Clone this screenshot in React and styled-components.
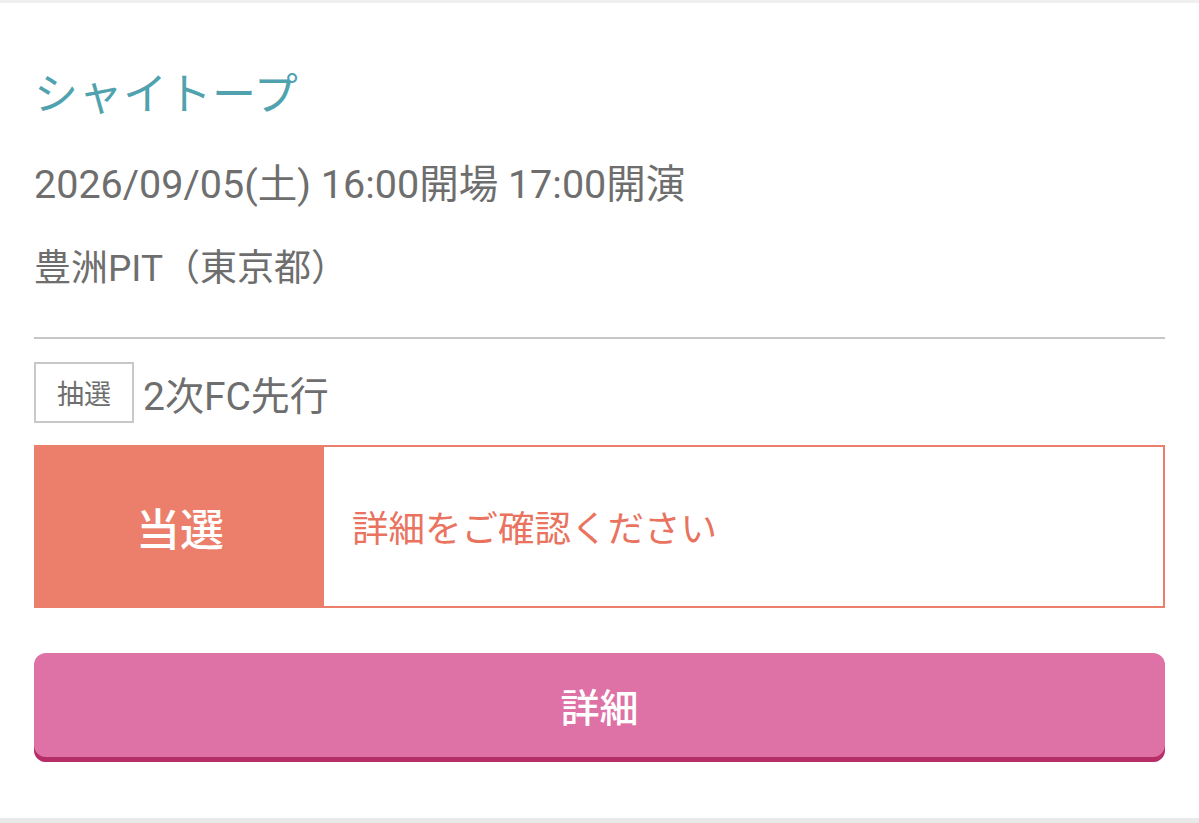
import React from "react";
import styled, { createGlobalStyle } from "styled-components";

const Global = createGlobalStyle`
  html, body { margin: 0; padding: 0; background: #fff; }
  body { font-family: Roboto, "Noto Sans CJK JP", sans-serif; }
`;

const Page = styled.div`
  width: 1199px;
  height: 823px;
  box-sizing: border-box;
  border-top: 3px solid #efefef;
  border-bottom: 5px solid #e9e9e9;
  background: #fff;
  padding: 0 34px;
  display: flex;
  flex-direction: column;
`;

const Title = styled.h1`
  margin: 56px 0 0;
  font-family: "Noto Sans CJK JP", sans-serif;
  font-size: 44px;
  font-weight: 400;
  line-height: 64px;
  color: #4fa2ae;
  letter-spacing: 0.5px;
`;

const InfoLine = styled.p`
  margin: ${(p) => p.$mt}px 0 0;
  font-size: ${(p) => p.$size}px;
  line-height: 56px;
  color: #6e6e6e;
`;

const Divider = styled.hr`
  margin: 40px 0 0;
  border: none;
  height: 2px;
  background: #c6c6c6;
`;

const TicketRow = styled.div`
  margin-top: 23px;
  display: flex;
  align-items: center;
  gap: 9px;
`;

const Badge = styled.span`
  box-sizing: border-box;
  width: 100px;
  height: 61px;
  border: 2px solid #c8c8c8;
  display: flex;
  align-items: center;
  justify-content: center;
  font-size: 27px;
  color: #6e6e6e;
`;

const TicketName = styled.span`
  font-size: 39px;
  color: #6e6e6e;
`;

const StatusBox = styled.div`
  margin-top: 22px;
  box-sizing: border-box;
  height: 163px;
  border: 2px solid #ec7f6b;
  display: flex;
`;

const StatusLabel = styled.div`
  width: 288px;
  background: #ec7f6b;
  color: #fff;
  font-size: 44px;
  font-weight: 500;
  display: flex;
  align-items: center;
  justify-content: center;
`;

const StatusMessage = styled.div`
  flex: 1;
  padding-left: 28px;
  display: flex;
  align-items: center;
  font-size: 36.5px;
  color: #e9735f;
`;

const DetailButton = styled.button`
  margin-top: 45px;
  height: 109px;
  border: none;
  border-radius: 12px;
  background: #de72a6;
  box-shadow: inset 0 -5px 0 #b52f66;
  color: #fff;
  font-family: inherit;
  font-size: 39px;
  font-weight: 500;
  padding: 0 0 5px;
`;

export default function App() {
  return (
    <>
      <Global />
      <Page>
        <Title>シャイトープ</Title>
        <InfoLine $mt={34} $size={39.5}>
          2026/09/05(土) 16:00開場 17:00開演
        </InfoLine>
        <InfoLine $mt={28} $size={37}>
          豊洲PIT（東京都）
        </InfoLine>
        <Divider />
        <TicketRow>
          <Badge>抽選</Badge>
          <TicketName>2次FC先行</TicketName>
        </TicketRow>
        <StatusBox>
          <StatusLabel>当選</StatusLabel>
          <StatusMessage>詳細をご確認ください</StatusMessage>
        </StatusBox>
        <DetailButton>詳細</DetailButton>
      </Page>
    </>
  );
}
